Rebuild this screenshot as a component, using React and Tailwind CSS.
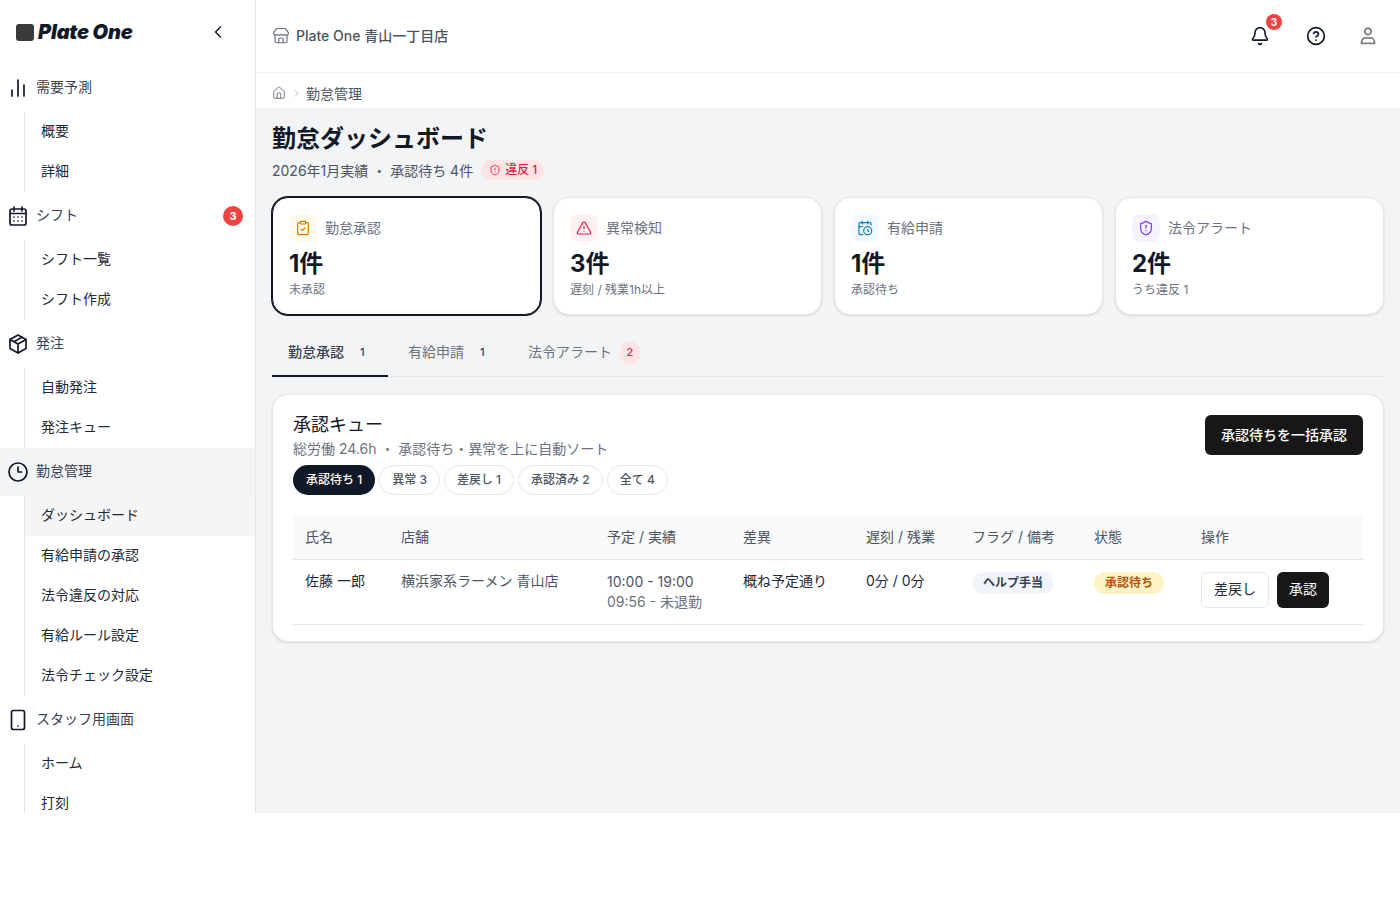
import React from "react";
import {
  Bell,
  CalendarClock,
  ChevronLeft,
  ChevronRight,
  CircleHelp,
  ClipboardCheck,
  Home,
  ShieldAlert,
  Store,
  TriangleAlert,
} from "lucide-react";

const font = { fontFamily: "Inter, 'Noto Sans CJK JP', sans-serif" };

const NavIcon = ({ children }) => (
  <svg width="24" height="24" viewBox="0 0 24 24" fill="none" stroke="#111827" strokeWidth="1.7" strokeLinecap="round" strokeLinejoin="round">
    {children}
  </svg>
);

const BarsIcon = () => (
  <NavIcon>
    <path d="M6 20v-6" />
    <path d="M12 20V4" />
    <path d="M18 20V9" />
  </NavIcon>
);

const CalendarIcon = () => (
  <NavIcon>
    <rect x="4" y="5" width="16" height="16" rx="2" />
    <path d="M8 3v4M16 3v4M4 9.5h16" />
    <path d="M8 13h.01M12 13h.01M16 13h.01M8 17h.01M12 17h.01M16 17h.01" />
  </NavIcon>
);

const BoxIcon = () => (
  <NavIcon>
    <path d="M12 3l8 4.5v9L12 21l-8-4.5v-9L12 3z" />
    <path d="M12 12l8-4.5M12 12v9M12 12L4 7.5M16 5.25L8 9.75" />
  </NavIcon>
);

const ClockIcon = () => (
  <NavIcon>
    <circle cx="12" cy="12" r="9" />
    <path d="M12 7v5h3.5" />
  </NavIcon>
);

const PhoneIcon = () => (
  <NavIcon>
    <rect x="5.5" y="2.5" width="13" height="19" rx="2" />
    <path d="M12 18h.01" />
  </NavIcon>
);

const PersonIcon = () => (
  <svg width="22" height="22" viewBox="0 0 24 24" fill="none" stroke="#808080" strokeWidth="2" strokeLinejoin="round">
    <circle cx="12" cy="7" r="3.5" />
    <path d="M5 20v-1.5a4.5 4.5 0 0 1 4.5-4.5h5a4.5 4.5 0 0 1 4.5 4.5V20z" />
  </svg>
);

const nav = [
  { label: "需要予測", icon: BarsIcon, children: ["概要", "詳細"] },
  { label: "シフト", icon: CalendarIcon, badge: 3, children: ["シフト一覧", "シフト作成"] },
  { label: "発注", icon: BoxIcon, children: ["自動発注", "発注キュー"] },
  {
    label: "勤怠管理",
    icon: ClockIcon,
    active: true,
    children: ["ダッシュボード", "有給申請の承認", "法令違反の対応", "有給ルール設定", "法令チェック設定"],
  },
  { label: "スタッフ用画面", icon: PhoneIcon, children: ["ホーム", "打刻"] },
];

const cards = [
  { title: "勤怠承認", value: "1件", note: "未承認", icon: ClipboardCheck, box: "bg-[#fffbeb]", color: "text-[#d97706]", selected: true },
  { title: "異常検知", value: "3件", note: "遅刻 / 残業1h以上", icon: TriangleAlert, box: "bg-[#fff1f2]", color: "text-[#e11d48]" },
  { title: "有給申請", value: "1件", note: "承認待ち", icon: CalendarClock, box: "bg-[#f0f9ff]", color: "text-[#0284c7]" },
  { title: "法令アラート", value: "2件", note: "うち違反 1", icon: ShieldAlert, box: "bg-[#f5f3ff]", color: "text-[#7c3aed]" },
];

const filters = ["異常 3", "差戻し 1", "承認済み 2", "全て 4"];
const heads = ["氏名", "店舗", "予定 / 実績", "差異", "遅刻 / 残業", "フラグ / 備考", "状態", "操作"];

const Sidebar = () => (
  <aside className="w-[256px] shrink-0 border-r border-[#e5e7eb] bg-white overflow-hidden">
    <div className="h-[64px] flex items-center justify-between pl-4 pr-[27px]">
      <div className="flex items-center gap-[4px]">
        <span className="w-[18px] h-[17px] rounded-[3px] bg-[#3a3a3d]"></span>
        <span className="text-[20px] font-black italic text-[#111827] tracking-[-0.2px]">Plate One</span>
      </div>
      <ChevronLeft size={20} strokeWidth={1.8} className="text-[#111827]" />
    </div>
    {nav.map((item) => {
      const Icon = item.icon;
      return (
        <div key={item.label}>
          <div className={`h-12 flex items-center pl-[6px] pr-[12px] ${item.active ? "bg-[#f3f4f6]" : ""}`}>
            <Icon />
            <span className="ml-[6px] mb-[4px] text-[14px] text-[#374151]">{item.label}</span>
            {item.badge && (
              <span className="ml-auto w-5 h-5 rounded-full bg-[#ef4444] text-white text-[11px] font-bold flex items-center justify-center">
                {item.badge}
              </span>
            )}
          </div>
          <div className="ml-6 border-l border-[#e5e7eb]">
            {item.children.map((child) => (
              <div
                key={child}
                className={`h-10 flex items-center pl-4 pb-[4px] text-[14px] text-[#1f2937] ${child === "ダッシュボード" ? "bg-[#f5f5f5]" : ""}`}
              >
                {child}
              </div>
            ))}
          </div>
        </div>
      );
    })}
  </aside>
);

const Header = () => (
  <>
    <header className="h-[73px] shrink-0 border-b border-[#f3f4f6] bg-white flex items-center pl-4 pr-[21px]">
      <Store size={18} strokeWidth={1.6} className="text-[#6b7280]" />
      <span className="ml-[6px] mb-[2px] text-[14px] font-medium text-[#4b5563]">Plate One 青山一丁目店</span>
      <div className="ml-auto flex items-center">
        <div className="relative">
          <Bell size={20} strokeWidth={2} className="text-[#111827]" />
          <span className="absolute -top-3 left-4 w-4 h-4 rounded-full bg-[#ef4444] text-white text-[10px] font-bold flex items-center justify-center">
            3
          </span>
        </div>
        <CircleHelp size={20} strokeWidth={2} className="ml-9 text-[#111827]" />
        <span className="ml-[31px]">
          <PersonIcon />
        </span>
      </div>
    </header>
    <div className="h-[35px] shrink-0 bg-white flex items-center pl-4 pt-[5px]">
      <Home size={14} strokeWidth={1.6} className="text-[#6b7280]" />
      <ChevronRight size={11} strokeWidth={1.6} className="ml-[5px] text-[#9ca3af]" />
      <span className="ml-[4px] text-[14px] text-[#4b5563]">勤怠管理</span>
    </div>
  </>
);

const SummaryCard = ({ card }) => {
  const Icon = card.icon;
  return (
    <div
      className={`h-[118px] rounded-2xl border bg-white pl-4 pt-4 ${
        card.selected ? "border-[#111827] ring-1 ring-[#111827]" : "border-[#e5e7eb] shadow-sm"
      }`}
    >
      <div className="flex items-center">
        <span className={`w-[28px] h-[28px] rounded-lg flex items-center justify-center ${card.box}`}>
          <Icon size={16} strokeWidth={1.8} className={card.color} />
        </span>
        <span className="ml-2 mb-[2px] text-[14px] text-[#6b7280]">{card.title}</span>
      </div>
      <div className="mt-[4px] text-[24px] leading-[36px] font-bold text-[#111827]">{card.value}</div>
      <div className="text-[12px] leading-[16px] text-[#6b7280]">{card.note}</div>
    </div>
  );
};

const Tabs = () => (
  <div className="mt-[14px] h-[48px] flex border-b border-[#e5e7eb]">
    <div className="w-[116px] h-[48px] border-b-2 border-[#111827] flex items-center pl-4 pb-[2px]">
      <span className="text-[14px] font-medium text-[#374151]">勤怠承認</span>
      <span className="ml-4 mt-[2px] text-[11px] font-medium text-[#374151]">1</span>
    </div>
    <div className="w-[120px] flex items-center pl-5 pb-[2px]">
      <span className="text-[14px] text-[#6b7280]">有給申請</span>
      <span className="ml-4 mt-[2px] text-[11px] font-medium text-[#374151]">1</span>
    </div>
    <div className="flex items-center pl-5 pb-[2px]">
      <span className="text-[14px] text-[#6b7280]">法令アラート</span>
      <span className="ml-2 mt-[2px] w-5 h-6 rounded-full bg-[#ffe4e6] text-[#e11d48] text-[11px] font-medium flex items-center justify-center">
        2
      </span>
    </div>
  </div>
);

const QueueTable = () => (
  <table className="mt-5 w-full table-fixed text-left border-collapse">
    <colgroup>
      <col className="w-[96px]" />
      <col className="w-[206px]" />
      <col className="w-[136px]" />
      <col className="w-[123px]" />
      <col className="w-[106px]" />
      <col className="w-[122px]" />
      <col className="w-[107px]" />
      <col />
    </colgroup>
    <thead>
      <tr className="h-[44px] bg-[#f9fafb] border-b border-[#e5e7eb]">
        {heads.map((h) => (
          <th key={h} className="px-3 text-[14px] font-normal text-[#4b5563]">
            {h}
          </th>
        ))}
      </tr>
    </thead>
    <tbody>
      <tr className="h-[65px] border-b border-[#e5e7eb] align-top">
        <td className="px-3 pt-[11px] text-[14px] leading-[20px] text-[#1f2937]">佐藤 一郎</td>
        <td className="px-3 pt-[11px] text-[14px] leading-[20px] text-[#4b5563]">横浜家系ラーメン 青山店</td>
        <td className="px-3 pt-[12px] text-[14px] leading-[20px] text-[#4b5563]">
          <div>10:00 - 19:00</div>
          <div className="text-[#6b7280]">09:56 - 未退勤</div>
        </td>
        <td className="px-3 pt-[11px] text-[14px] leading-[20px] text-[#1f2937]">概ね予定通り</td>
        <td className="px-3 pt-[11px] text-[14px] leading-[20px] text-[#1f2937]">0分 / 0分</td>
        <td className="px-3 pt-[9px]">
          <span className="inline-flex items-center h-[22px] px-[11px] rounded-full bg-[#f1f5f9] text-[12px] font-semibold text-[#374151]">
            ヘルプ手当
          </span>
        </td>
        <td className="px-3 pt-[9px]">
          <span className="inline-flex items-center h-[22px] px-[11px] rounded-full bg-[#fef3c7] text-[12px] font-semibold text-[#b45309]">
            承認待ち
          </span>
        </td>
        <td className="px-3 pt-[12px]">
          <div className="flex gap-2">
            <button className="h-9 w-[68px] pb-[2px] rounded-md border border-[#e5e7eb] bg-white text-[14px] text-[#1f2937]">差戻し</button>
            <button className="h-9 w-[52px] pb-[2px] rounded-md bg-[#171717] text-[14px] text-white">承認</button>
          </div>
        </td>
      </tr>
    </tbody>
  </table>
);

const QueuePanel = () => (
  <section className="mt-[17px] h-[248px] rounded-2xl border border-[#e5e7eb] bg-white shadow-sm px-5 pt-[17px]">
    <div className="flex justify-between">
      <div>
        <h2 className="text-[18px] leading-[26px] font-normal text-[#111827]">承認キュー</h2>
        <p className="mt-[1px] text-[14px] leading-[20px] text-[#6b7280]">総労働 24.6h ・ 承認待ち・異常を上に自動ソート</p>
      </div>
      <button className="mt-[3px] h-10 w-[158px] pb-[2px] rounded-md bg-[#171717] text-white text-[14px] font-medium">
        承認待ちを一括承認
      </button>
    </div>
    <div className="mt-[6px] flex gap-1">
      <button className="h-[30px] px-[13px] rounded-full bg-[#111827] text-white text-[12px] font-medium">承認待ち 1</button>
      {filters.map((f) => (
        <button key={f} className="h-[30px] px-3 rounded-full border border-[#e5e7eb] bg-white text-[12px] font-medium text-[#4b5563]">
          {f}
        </button>
      ))}
    </div>
    <QueueTable />
  </section>
);

const App = () => (
  <div className="h-[813px] w-full flex overflow-hidden" style={font}>
    <Sidebar />
    <div className="flex-1 min-w-0 flex flex-col">
      <Header />
      <main className="flex-1 bg-[#f3f4f6] pl-4 pr-4 pt-[15px]">
        <h1 className="text-[24px] leading-[32px] font-bold text-[#111827]">勤怠ダッシュボード</h1>
        <div className="mt-[3px] h-6 flex items-center text-[14px] text-[#4b5563]">
          <span>2026年1月実績 ・ 承認待ち 4件</span>
          <span className="ml-2 h-[20px] px-2 rounded-full bg-[#ffe4e6] text-[#e11d48] text-[12px] font-medium flex items-center gap-1">
            <ShieldAlert size={12} strokeWidth={1.8} />
            違反 1
          </span>
        </div>
        <div className="mt-[15px] grid grid-cols-4 gap-3">
          {cards.map((card) => (
            <SummaryCard key={card.title} card={card} />
          ))}
        </div>
        <Tabs />
        <QueuePanel />
      </main>
    </div>
  </div>
);

export default App;
